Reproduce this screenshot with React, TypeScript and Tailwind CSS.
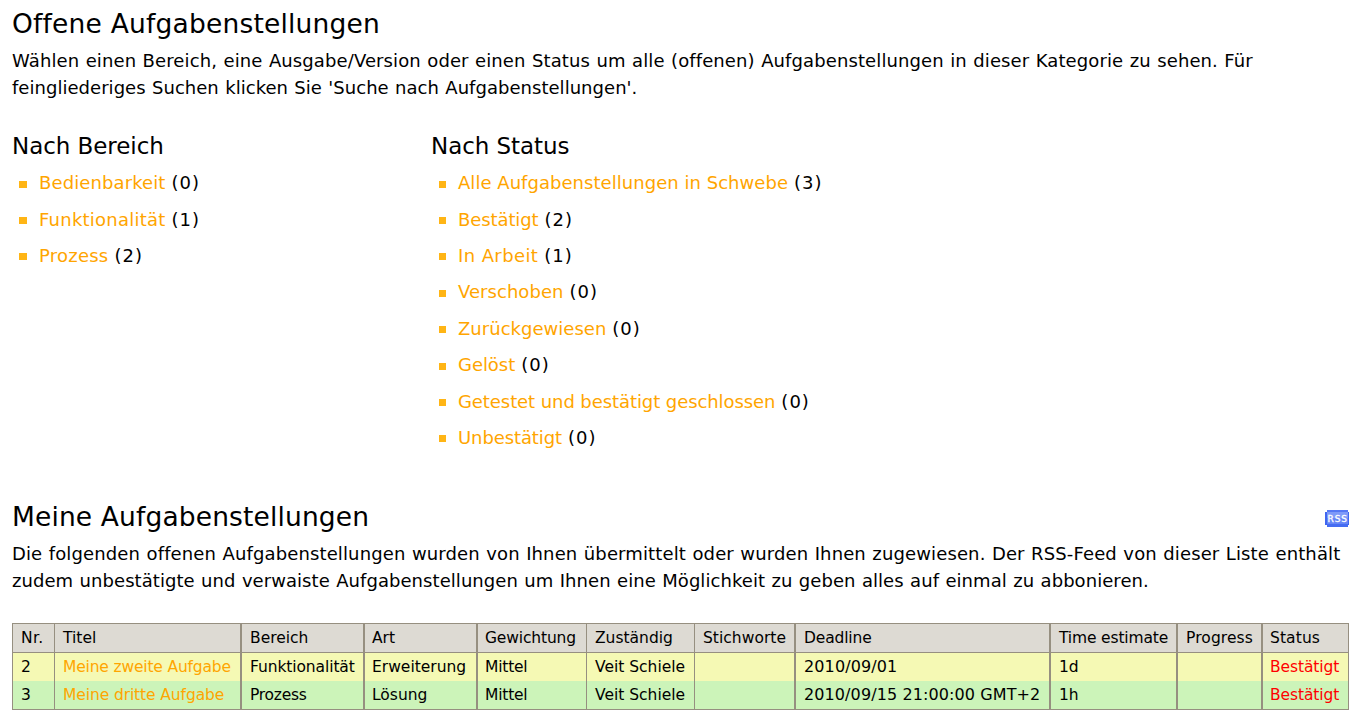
import React from "react";

type Entry = { label: string; count: number; spacing: string };

const areas: Entry[] = [
  { label: "Bedienbarkeit", count: 0, spacing: "tracking-[0.11px]" },
  { label: "Funktionalität", count: 1, spacing: "tracking-[0.23px]" },
  { label: "Prozess", count: 2, spacing: "tracking-[0.23px]" },
];

const states: Entry[] = [
  { label: "Alle Aufgabenstellungen in Schwebe", count: 3, spacing: "tracking-[0.04px]" },
  { label: "Bestätigt", count: 2, spacing: "tracking-[-0.1px]" },
  { label: "In Arbeit", count: 1, spacing: "tracking-[0.4px]" },
  { label: "Verschoben", count: 0, spacing: "tracking-[0.05px]" },
  { label: "Zurückgewiesen", count: 0, spacing: "tracking-[0.02px]" },
  { label: "Gelöst", count: 0, spacing: "tracking-[-0.05px]" },
  { label: "Getestet und bestätigt geschlossen", count: 0, spacing: "tracking-[-0.08px]" },
  { label: "Unbestätigt", count: 0, spacing: "tracking-[-0.1px]" },
];

const columns = [
  { title: "Nr.", cell: "w-[42px] border-l pl-[8px]", spacing: "tracking-[0.4px]" },
  { title: "Titel", cell: "w-[186px] border-l pl-[8px]", spacing: "tracking-[0px]" },
  { title: "Bereich", cell: "w-[123px] border-l-2 pl-[8px]", spacing: "tracking-[0px]" },
  { title: "Art", cell: "w-[113px] border-l-2 pl-[7px]", spacing: "tracking-[0px]" },
  { title: "Gewichtung", cell: "w-[110px] border-l-2 pl-[7px]", spacing: "tracking-[-0.15px]" },
  { title: "Zuständig", cell: "w-[108px] border-l pl-[8px]", spacing: "tracking-[0px]" },
  { title: "Stichworte", cell: "w-[100px] border-l pl-[8px]", spacing: "tracking-[0.03px]" },
  { title: "Deadline", cell: "w-[255px] border-l-2 pl-[8px]", spacing: "tracking-[-0.15px]" },
  { title: "Time estimate", cell: "w-[127px] border-l-2 pl-[8px]", spacing: "tracking-[-0.15px]" },
  { title: "Progress", cell: "w-[85px] border-l-2 pl-[8px]", spacing: "tracking-[0.1px]" },
  { title: "Status", cell: "w-[88px] border-l-2 border-r pl-[7px]", spacing: "tracking-[0.1px]" },
];

type Cell = [string, string];

const rows: Cell[][] = [
  [
    ["2", ""],
    ["Meine zweite Aufgabe", "tracking-[-0.17px]"],
    ["Funktionalität", "tracking-[-0.1px]"],
    ["Erweiterung", ""],
    ["Mittel", "tracking-[-0.2px]"],
    ["Veit Schiele", ""],
    ["", ""],
    ["2010/09/01", "text-[16px] tracking-[0.12px]"],
    ["1d", ""],
    ["", ""],
    ["Bestätigt", "tracking-[-0.1px]"],
  ],
  [
    ["3", ""],
    ["Meine dritte Aufgabe", "tracking-[-0.1px]"],
    ["Prozess", "tracking-[-0.25px]"],
    ["Lösung", ""],
    ["Mittel", "tracking-[-0.2px]"],
    ["Veit Schiele", ""],
    ["", ""],
    ["2010/09/15 21:00:00 GMT+2", "text-[16px] tracking-[0.1px]"],
    ["1h", ""],
    ["", ""],
    ["Bestätigt", "tracking-[-0.1px]"],
  ],
];

function EntryList({ title, entries, bullet }: { title: string; entries: Entry[]; bullet: string }) {
  return (
    <section>
      <h2 className="h-[36.5px] pt-px text-[23px] leading-[34px] tracking-[-0.06px]">{title}</h2>
      <ul>
        {entries.map((e) => (
          <li key={e.label} className="flex h-[36.4px] items-center">
            <span className={`mt-[3px] h-[7px] ${bullet} bg-[#ffb515]`} />
            <a className={`text-[#ffa500] ${e.spacing}`}>{e.label}</a>
            <span className="pl-[6px] tracking-[1px]">({e.count})</span>
          </li>
        ))}
      </ul>
    </section>
  );
}

function RssBadge() {
  return (
    <svg width="24" height="17" viewBox="0 0 24 17" className="mt-[13px]">
      <rect x="0" y="2" width="24" height="13" fill="#3f66f0" />
      <rect x="2" y="0" width="21" height="17" fill="#5577f4" />
      <rect x="2" y="2" width="21" height="12" fill="#7f9af8" />
      <rect x="2" y="8" width="21" height="6" fill="#6686f6" />
      <rect x="2" y="14" width="21" height="3" fill="#456cf2" />
      <text x="2.5" y="12" fontSize="9" fill="#ffffff" stroke="#ffffff" strokeWidth="0.3" textLength="19.5" fontFamily="DejaVu Sans, sans-serif">RSS</text>
    </svg>
  );
}

export default function App() {
  return (
    <main className="h-[722px] overflow-hidden bg-white px-[12px] font-['DejaVu_Sans',Verdana,sans-serif] text-[18px] leading-[27px] text-black">
      <h1 className="h-[47px] pt-[4px] text-[26.5px] leading-[39px] tracking-[0.19px]">Offene Aufgabenstellungen</h1>
      <p className="h-[81px] whitespace-nowrap [word-spacing:0.6px]">
        <span className="tracking-[0.11px]">
          Wählen einen Bereich, eine Ausgabe/Version oder einen Status um alle (offenen) Aufgabenstellungen in dieser Kategorie zu sehen. Für
        </span>
        <br />
        <span className="tracking-[0.035px]">feingliederiges Suchen klicken Sie 'Suche nach Aufgabenstellungen'.</span>
      </p>
      <div className="grid h-[365px] grid-cols-[419px_1fr]">
        <EntryList title="Nach Bereich" entries={areas} bullet="ml-[7px] mr-[12px] w-[8px]" />
        <EntryList title="Nach Status" entries={states} bullet="ml-[8px] mr-[12px] w-[7px]" />
      </div>
      <div className="flex h-[47px] justify-between pt-[4px]">
        <h1 className="text-[26.5px] leading-[39px] tracking-[0.13px]">Meine Aufgabenstellungen</h1>
        <RssBadge />
      </div>
      <p className="h-[83px] whitespace-nowrap [word-spacing:0.6px]">
        <span className="tracking-[0.127px]">
          Die folgenden offenen Aufgabenstellungen wurden von Ihnen übermittelt oder wurden Ihnen zugewiesen. Der RSS-Feed von dieser Liste enthält
        </span>
        <br />
        <span className="tracking-[0.06px]">
          zudem unbestätigte und verwaiste Aufgabenstellungen um Ihnen eine Möglichkeit zu geben alles auf einmal zu abbonieren.
        </span>
      </p>
      <table className="w-[1337px] table-fixed border-separate border-spacing-0 text-[15.5px] leading-[28px] whitespace-nowrap">
        <thead>
          <tr className="bg-[#dddad3]">
            {columns.map((c) => (
              <th key={c.title} className={`${c.cell} ${c.spacing} h-[30px] border-y border-[#968f80] py-0 pr-0 text-left font-normal`}>{c.title}</th>
            ))}
          </tr>
        </thead>
        <tbody>
          {rows.map((r, i) => (
            <tr key={i} className={i === 0 ? "bg-[#f5f9b4]" : "bg-[#ccf4b9]"}>
              {r.map(([text, spacing], j) => (
                <td
                  key={j}
                  className={`${columns[j].cell} ${spacing} border-[#968f80] py-0 pr-0 ${i === 1 ? "h-[29px] border-b" : "h-[28px]"} ${j === 1 ? "text-[#ffa500]" : j === 10 ? "text-[#ff0000]" : ""}`}
                >
                  {text}
                </td>
              ))}
            </tr>
          ))}
        </tbody>
      </table>
    </main>
  );
}
